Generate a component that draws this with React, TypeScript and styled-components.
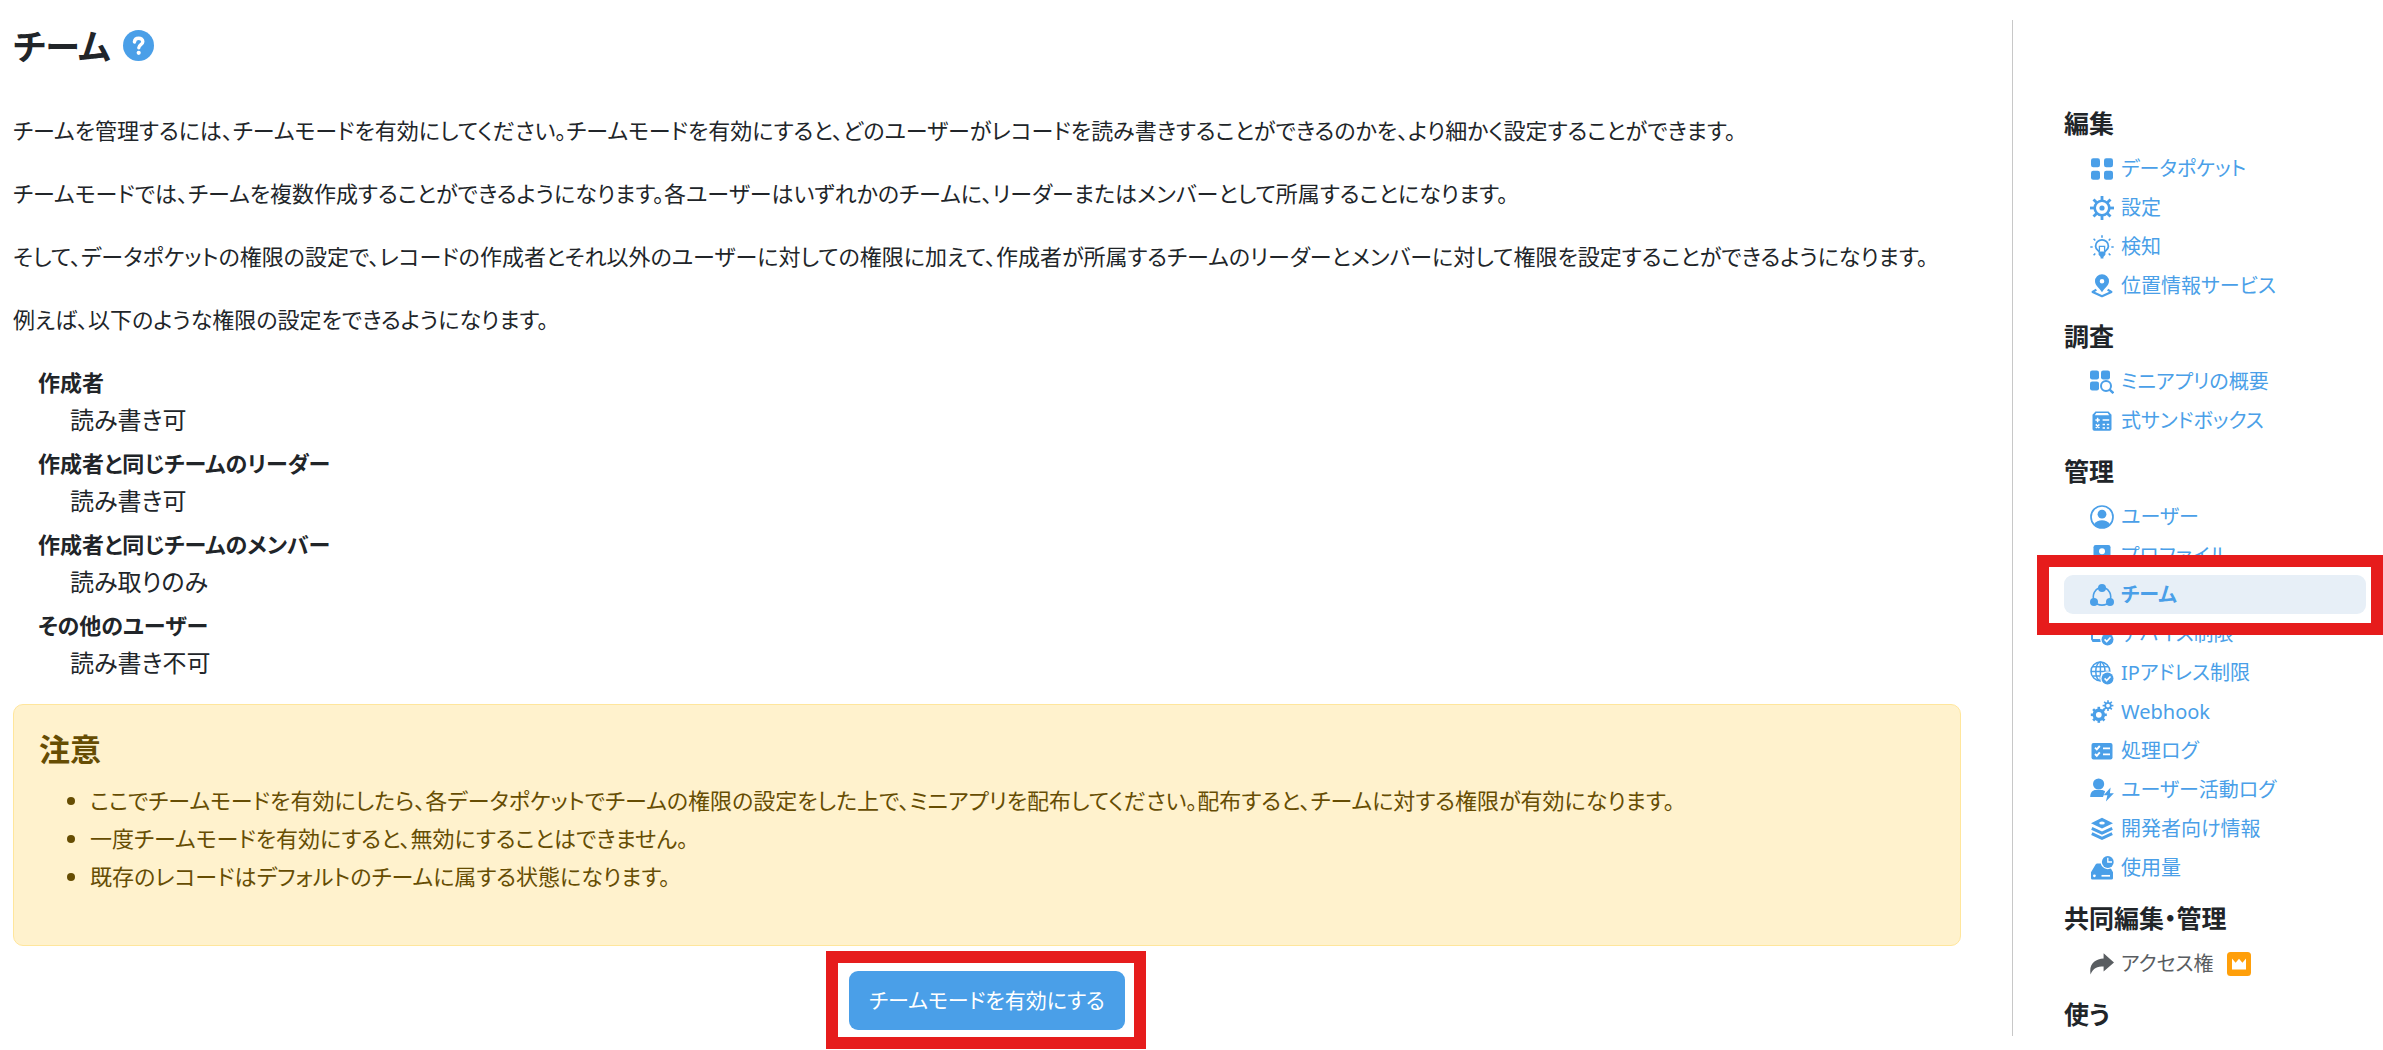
import React from 'react';
import styled, { createGlobalStyle } from 'styled-components';

const blue = '#4a9fe8';
const red = '#e61c1c';

const GlobalStyle = createGlobalStyle`
  *, *::before, *::after { box-sizing: border-box; }
  body {
    margin: 0;
    background: #fff;
    color: #212529;
    font-family: "Noto Sans", "Noto Sans CJK JP", sans-serif;
    font-feature-settings: "palt";
    font-size: 22px;
    line-height: 38px;
  }
`;

const Page = styled.div`
  display: grid;
  grid-template-columns: minmax(0, 1fr) 354px;
  column-gap: 51px;
  padding: 20px 17px 0 13px;
`;

const Main = styled.main`
  min-width: 0;
`;

const TitleRow = styled.div`
  display: flex;
  align-items: center;
  gap: 12px;
  height: 50px;
  margin-bottom: 41px;
`;

const Title = styled.h1`
  margin: 0;
  padding-top: 4px;
  font-size: 35px;
  line-height: 50px;
  font-weight: 600;
`;

const HelpButton = styled.button`
  display: flex;
  padding: 0;
  border: 0;
  background: none;
  color: ${blue};
`;

const Paragraph = styled.p`
  margin: 0 0 25px;
`;

const Rules = styled.dl`
  margin: 0 0 22px;
  padding-left: 25px;
`;

const RuleName = styled.dt`
  font-weight: 600;
`;

const RuleValue = styled.dd`
  margin: 0 0 5px 32px;
  font-size: 24px;
`;

const Notice = styled.section`
  padding: 25px;
  border: 1px solid #ffe69c;
  border-radius: 10px;
  background: #fff2cd;
  color: #664d03;
`;

const NoticeTitle = styled.h2`
  margin: 0 0 13px;
  font-size: 31px;
  line-height: 38px;
  font-weight: 600;
`;

const NoticeList = styled.ul`
  margin: 0 0 25px;
  padding-left: 51px;
`;

const Actions = styled.div`
  display: flex;
  justify-content: center;
  padding: 25px 0 19px;
`;

const Highlight = styled.div`
  position: relative;
  &::after {
    content: "";
    position: absolute;
    inset: -20px -21px -19px -23px;
    border: 12px solid ${red};
    pointer-events: none;
  }
`;

const PrimaryButton = styled.button`
  display: block;
  padding: 10px 20px;
  border: 0;
  border-radius: 9px;
  background: ${blue};
  color: #fff;
  font: inherit;
  font-size: 21px;
  line-height: 39px;
  font-feature-settings: inherit;
`;

const Sidebar = styled.nav`
  align-self: start;
  padding: 84px 0 3px 51px;
  border-left: 1px solid #c8c8c8;
`;

const Group = styled.section`
  & + & { margin-top: 12px; }
`;

const GroupTitle = styled.h2`
  margin: 0;
  font-size: 25px;
  line-height: 38px;
  font-weight: 600;
`;

const Links = styled.ul`
  margin: 7px 0 0;
  padding: 0;
  list-style: none;
`;

const LinkItem = styled.li<{ $active?: boolean }>`
  position: relative;
  ${({ $active }) => $active && `
    z-index: 1;
    &::before {
      content: "";
      position: absolute;
      z-index: -1;
      inset: -20px -17px -21px -27px;
      border: 12px solid ${red};
      background: #fff;
    }
  `}
`;

const NavLink = styled.a<{ $active?: boolean; $muted?: boolean }>`
  display: flex;
  align-items: center;
  gap: 7px;
  height: 39px;
  padding-left: 26px;
  border-radius: 9px;
  background: ${({ $active }) => ($active ? '#e7eff7' : 'transparent')};
  color: ${({ $muted }) => ($muted ? '#595d61' : blue)};
  font-size: 20px;
  font-weight: ${({ $active }) => ($active ? 600 : 400)};
  text-decoration: none;
  white-space: nowrap;
`;

const Glyph = styled.svg`
  flex: none;
  width: 24px;
  height: 24px;
  fill: currentColor;
`;

const CrownBadge = styled(Glyph)`
  margin-left: 6px;
`;

type CogProps = { cx: number; cy: number; r: number; tooth: number; ring: number; width: number };

function Cog({ cx, cy, r, tooth, ring, width }: CogProps) {
  return (
    <g transform={`translate(${cx} ${cy})`} stroke="currentColor" fill="none">
      <circle r={r} strokeWidth={ring} />
      {[0, 45, 90, 135, 180, 225, 270, 315].map((a) => (
        <path key={a} d={`M0 ${-r}V${-tooth}`} strokeWidth={width} transform={`rotate(${a})`} />
      ))}
    </g>
  );
}

const CheckBadge = () => (
  <>
    <circle cx="17.5" cy="17.5" r="7.3" fill="#fff" />
    <circle cx="17.5" cy="17.5" r="6" />
    <path d="M14.6 17.4l2.1 2.1 3.8-4" fill="none" stroke="#fff" strokeWidth="1.6" />
  </>
);

const icons: Record<string, React.ReactNode> = {
  grid: (
    <>
      <rect x="1" y="1.3" width="9" height="9" rx="2.2" />
      <rect x="14" y="1.3" width="9" height="9" rx="2.2" />
      <rect x="1" y="13.7" width="9" height="9" rx="2.2" />
      <rect x="14" y="13.7" width="9" height="9" rx="2.2" />
    </>
  ),
  gear: (
    <>
      <Cog cx={12} cy={12} r={7.3} tooth={12} ring={2.6} width={2.8} />
      <circle cx="12" cy="12" r="2.6" />
    </>
  ),
  bulb: (
    <>
      <path
        d="M12 0.3v2.4M0.3 12h2.4M21.3 12h2.4M3.6 3.8l1.7 1.7M20.4 3.8l-1.7 1.7M3.6 20.2l1.7-1.7M20.4 20.2l-1.7-1.7"
        fill="none" stroke="currentColor" strokeWidth="1.6"
      />
      <path
        d="M9.2 17.2c0-1.6-3.6-2.6-3.6-6a6.4 6.4 0 0 1 12.8 0c0 3.4-3.6 4.4-3.6 6"
        fill="none" stroke="currentColor" strokeWidth="1.8"
      />
      <path d="M9.4 16v-4.6h5.2V16" fill="none" stroke="currentColor" strokeWidth="1.3" />
      <path d="M8.6 16.4h6.8v3.4l-2 2.2v1.6h-2.8V22l-2-2.2z" />
    </>
  ),
  location: (
    <>
      <path
        fillRule="evenodd"
        d="M12 0.2a7 7 0 0 0-7 7c0 4.2 4.4 6.8 7 11 2.6-4.2 7-6.8 7-11a7 7 0 0 0-7-7zm0 4.8a2.3 2.3 0 1 1 0 4.6 2.3 2.3 0 0 1 0-4.6z"
      />
      <path d="M6.4 15.6L2.6 18 12 22.2 21.4 18l-3.8-2.4" fill="none" stroke="currentColor" strokeWidth="2.2" strokeLinejoin="round" />
    </>
  ),
  gridSearch: (
    <>
      <rect x="0" y="0.4" width="9" height="9" rx="2.2" />
      <rect x="11" y="0.4" width="9" height="9" rx="2.2" />
      <rect x="0" y="11.4" width="9" height="9" rx="2.2" />
      <circle cx="16" cy="16" r="5" fill="none" stroke="currentColor" strokeWidth="2" />
      <path d="M19.6 19.6l3.8 3.6" stroke="currentColor" strokeWidth="2.4" />
    </>
  ),
  sheet: (
    <>
      <path
        fillRule="evenodd"
        d="M5.5 2.5h13l3 3.2V20a1.8 1.8 0 0 1-1.8 1.8H4.3A1.8 1.8 0 0 1 2.5 20V5.7zM6.3 4L4.8 6.2h14.4L17.7 4z"
      />
      <path
        d="M7.6 8.8v4.4M5.4 11h4.4M5.8 15.4l3.6 3.6M9.4 15.4L5.8 19M12.6 11h6.6M12.6 15.6h2.4M16.8 15.6h2.4M12.6 19h2.4M16.8 19h2.4"
        fill="none" stroke="#fff" strokeWidth="1.5"
      />
    </>
  ),
  userCircle: (
    <>
      <circle cx="12" cy="12" r="11" fill="none" stroke="currentColor" strokeWidth="1.7" />
      <circle cx="12" cy="9.2" r="4.4" />
      <path d="M4 19.2c1.6-2.8 4.8-4 8-4s6.4 1.2 8 4A11 11 0 0 1 12 23a11 11 0 0 1-8-3.8z" />
    </>
  ),
  profile: (
    <>
      <rect x="3.5" y="1" width="17" height="22" rx="2.2" />
      <circle cx="12" cy="7.2" r="3" fill="#fff" />
      <path d="M6.5 17c0-4 2.6-5.4 5.5-5.4s5.5 1.4 5.5 5.4z" fill="#fff" />
    </>
  ),
  team: (
    <>
      <path
        d="M9.2 4.8A9.5 9.5 0 0 0 3.6 16M14.8 4.8A9.5 9.5 0 0 1 20.4 16M7 21a12 12 0 0 0 10 0"
        fill="none" stroke="currentColor" strokeWidth="1.6"
      />
      <circle cx="12" cy="5" r="4" />
      <circle cx="4" cy="19" r="4" />
      <circle cx="20" cy="19" r="4" />
    </>
  ),
  device: (
    <>
      <path d="M2 17.5V5h18v5" fill="none" stroke="currentColor" strokeWidth="2" />
      <path d="M1 17h12v3H2.5z" />
      <CheckBadge />
    </>
  ),
  globe: (
    <>
      <g fill="none" stroke="currentColor" strokeWidth="1.5">
        <circle cx="10.4" cy="10.4" r="9.4" />
        <ellipse cx="10.4" cy="10.4" rx="4.6" ry="9.4" />
        <path d="M10.4 1v18.8M1 10.4h18.8M2.3 5.7h16.2M2.3 15h16.2" />
      </g>
      <CheckBadge />
    </>
  ),
  cogs: (
    <>
      <Cog cx={8.8} cy={14.8} r={4.6} tooth={8} ring={3.4} width={2.6} />
      <Cog cx={18} cy={5.6} r={2.8} tooth={5.4} ring={1.8} width={1.6} />
    </>
  ),
  checklist: (
    <>
      <rect x="1.5" y="4" width="21" height="16.5" rx="2" />
      <path d="M5 8.6l1.8 1.8 3-3.4M5 15l1.8 1.8 3-3.4M13 9.4h7M13 15.4h7" fill="none" stroke="#fff" strokeWidth="1.9" />
    </>
  ),
  userBolt: (
    <>
      <circle cx="8.6" cy="6" r="5.6" />
      <path d="M0.2 19c0-4.6 2.4-7 5.6-7h5.6c1.6 0 2.8.5 3.7 1.5L13 19z" />
      <path d="M20.6 9.6l-7 7.6h3.8l-1.5 6.2 8-8.2h-4z" />
    </>
  ),
  layers: (
    <>
      <path d="M12 0.8l11 5.4-11 5.2L1 6.2z" />
      <ellipse cx="12" cy="6" rx="2.8" ry="1.6" fill="#fff" />
      <path d="M1.8 11.4L12 16l10.2-4.6M1.8 16.6L12 21.4l10.2-4.8" fill="none" stroke="currentColor" strokeWidth="3" />
    </>
  ),
  usage: (
    <>
      <path d="M1 16.2L5.6 8.4A2 2 0 0 1 7.3 7.4h9l5.2 6 1.5 2.8v6a1.4 1.4 0 0 1-1.4 1.4H2.4A1.4 1.4 0 0 1 1 22.2z" />
      <circle cx="17.8" cy="6" r="7.2" fill="#fff" />
      <circle cx="17.8" cy="6" r="5.9" />
      <path d="M17.8 1.8V6H22" fill="none" stroke="#fff" strokeWidth="1.3" />
      <circle cx="4.4" cy="19.8" r="1.4" fill="#fff" />
      <path d="M11.5 19.8H20" stroke="#fff" strokeWidth="1.7" />
    </>
  ),
  share: <path d="M13.6 1.2L24 10.4l-10.4 9.2v-5.2C7.6 14.4 3 15.8 0.6 22.4-1.4 12 5.2 6.6 13.6 6.4z" />,
};

type Item = { icon: string; label: string; active?: boolean; muted?: boolean; premium?: boolean };

const groups: { title: string; items: Item[] }[] = [
  {
    title: '編集',
    items: [
      { icon: 'grid', label: 'データポケット' },
      { icon: 'gear', label: '設定' },
      { icon: 'bulb', label: '検知' },
      { icon: 'location', label: '位置情報サービス' },
    ],
  },
  {
    title: '調査',
    items: [
      { icon: 'gridSearch', label: 'ミニアプリの概要' },
      { icon: 'sheet', label: '式サンドボックス' },
    ],
  },
  {
    title: '管理',
    items: [
      { icon: 'userCircle', label: 'ユーザー' },
      { icon: 'profile', label: 'プロファイル' },
      { icon: 'team', label: 'チーム', active: true },
      { icon: 'device', label: 'デバイス制限' },
      { icon: 'globe', label: 'IPアドレス制限' },
      { icon: 'cogs', label: 'Webhook' },
      { icon: 'checklist', label: '処理ログ' },
      { icon: 'userBolt', label: 'ユーザー活動ログ' },
      { icon: 'layers', label: '開発者向け情報' },
      { icon: 'usage', label: '使用量' },
    ],
  },
  {
    title: '共同編集・管理',
    items: [{ icon: 'share', label: 'アクセス権', muted: true, premium: true }],
  },
  { title: '使う', items: [] },
];

const paragraphs = [
  'チームを管理するには、チームモードを有効にしてください。チームモードを有効にすると、どのユーザーがレコードを読み書きすることができるのかを、より細かく設定することができます。',
  'チームモードでは、チームを複数作成することができるようになります。各ユーザーはいずれかのチームに、リーダーまたはメンバーとして所属することになります。',
  'そして、データポケットの権限の設定で、レコードの作成者とそれ以外のユーザーに対しての権限に加えて、作成者が所属するチームのリーダーとメンバーに対して権限を設定することができるようになります。',
  '例えば、以下のような権限の設定をできるようになります。',
];

const rules = [
  ['作成者', '読み書き可'],
  ['作成者と同じチームのリーダー', '読み書き可'],
  ['作成者と同じチームのメンバー', '読み取りのみ'],
  ['その他のユーザー', '読み書き不可'],
];

const notes = [
  'ここでチームモードを有効にしたら、各データポケットでチームの権限の設定をした上で、ミニアプリを配布してください。配布すると、チームに対する権限が有効になります。',
  '一度チームモードを有効にすると、無効にすることはできません。',
  '既存のレコードはデフォルトのチームに属する状態になります。',
];

export default function App() {
  return (
    <>
      <GlobalStyle />
      <Page lang="ja">
        <Main>
          <TitleRow>
            <Title>チーム</Title>
            <HelpButton type="button" aria-label="ヘルプ">
              <svg width="31" height="31" viewBox="0 0 31 31" fill="none">
                <circle cx="15.5" cy="15.5" r="15.5" fill="currentColor" />
                <path d="M11.4 12c.2-2.4 1.8-3.8 4.3-3.8 2.4 0 4.1 1.4 4.1 3.5 0 2.9-4 2.9-4 6" stroke="#fff" strokeWidth="3.4" strokeLinecap="round" />
                <circle cx="15.7" cy="22.8" r="2.1" fill="#fff" />
              </svg>
            </HelpButton>
          </TitleRow>
          {paragraphs.map((text) => <Paragraph key={text}>{text}</Paragraph>)}
          <Rules>
            {rules.map(([name, value]) => (
              <React.Fragment key={name}>
                <RuleName>{name}</RuleName>
                <RuleValue>{value}</RuleValue>
              </React.Fragment>
            ))}
          </Rules>
          <Notice>
            <NoticeTitle>注意</NoticeTitle>
            <NoticeList>
              {notes.map((text) => <li key={text}>{text}</li>)}
            </NoticeList>
          </Notice>
          <Actions>
            <Highlight>
              <PrimaryButton type="button">チームモードを有効にする</PrimaryButton>
            </Highlight>
          </Actions>
        </Main>
        <Sidebar>
          {groups.map((group) => (
            <Group key={group.title}>
              <GroupTitle>{group.title}</GroupTitle>
              {group.items.length > 0 && (
                <Links>
                  {group.items.map((item) => (
                    <LinkItem key={item.label} $active={item.active}>
                      <NavLink href="#" $active={item.active} $muted={item.muted} aria-current={item.active ? 'page' : undefined}>
                        <Glyph viewBox="0 0 24 24" aria-hidden="true">{icons[item.icon]}</Glyph>
                        {item.label}
                        {item.premium && (
                          <CrownBadge viewBox="0 0 24 24" aria-hidden="true">
                            <rect width="24" height="24" rx="3.5" fill="#ff9f0a" />
                            <path d="M5 17.6V6.6l3.6 4.2L12 6.8l3.4 4L19 6.6v11z" fill="#fff" />
                          </CrownBadge>
                        )}
                      </NavLink>
                    </LinkItem>
                  ))}
                </Links>
              )}
            </Group>
          ))}
        </Sidebar>
      </Page>
    </>
  );
}
